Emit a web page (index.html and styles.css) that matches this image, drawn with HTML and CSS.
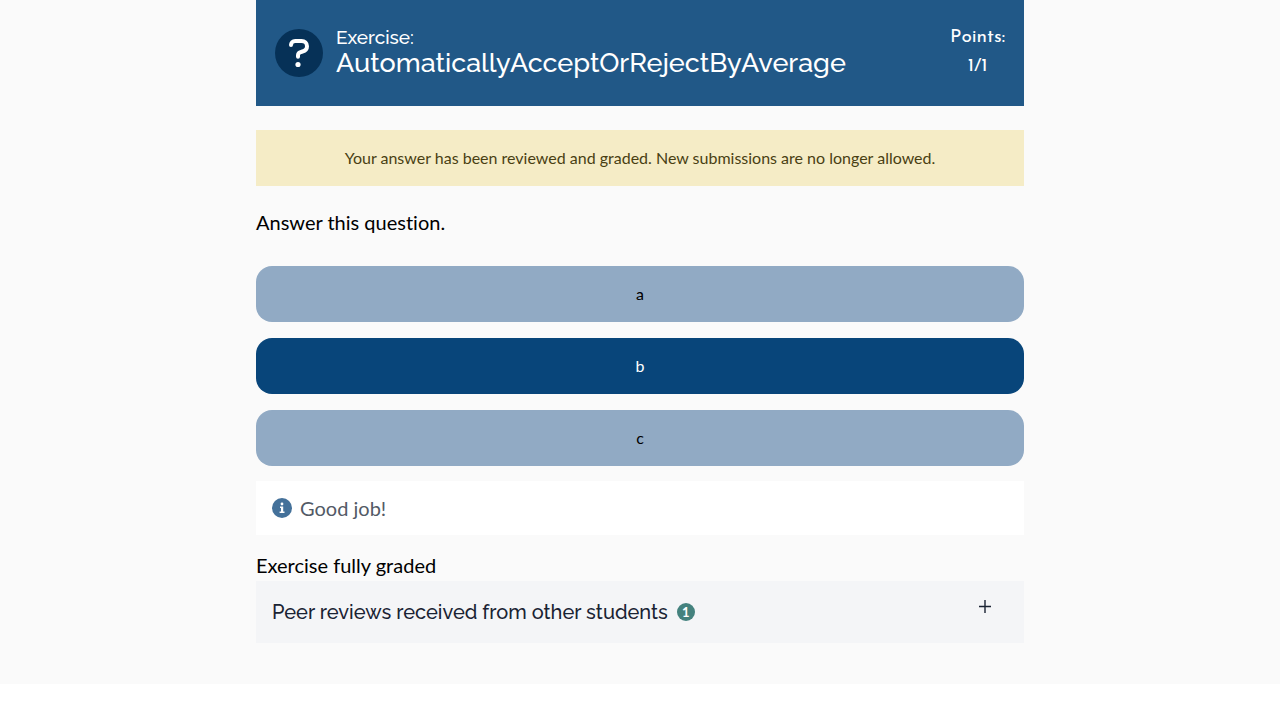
FILE: index.html
```html
<!DOCTYPE html>
<html lang="en">
<head>
<meta charset="utf-8">
<meta name="viewport" content="width=device-width, initial-scale=1">
<title>Exercise</title>
<link rel="stylesheet" href="styles.css">
</head>
<body>
<div class="page">
  <main class="exercise">
    <header class="exercise-header">
      <svg class="header-icon" viewBox="0 0 48 48" aria-hidden="true">
        <circle cx="24" cy="24" r="24" fill="#063157"/>
        <path d="M16 16.1C16 13.6 17.7 12 20.2 12h6.3c3.3 0 5.5 2.2 5.5 5.2 0 3-1.5 4.5-4.5 5.3L25 23.4c-1.4.6-2 1.5-2 3v1.4" fill="none" stroke="#fff" stroke-width="4" stroke-linecap="round" stroke-linejoin="round"/>
        <circle cx="23" cy="35.5" r="2.6" fill="#fff"/>
      </svg>
      <h1 class="title"><span class="title-label">Exercise:</span>AutomaticallyAcceptOrRejectByAverage</h1>
      <div class="points"><span>Points:</span><span>1/1</span></div>
    </header>
    <p class="notice">Your answer has been reviewed and graded. New submissions are no longer allowed.</p>
    <p class="question">Answer this question.</p>
    <div class="options">
      <button class="option" type="button">a</button>
      <button class="option option-selected" type="button" aria-pressed="true">b</button>
      <button class="option" type="button">c</button>
    </div>
    <div class="feedback">
      <svg class="info-icon" viewBox="0 0 20 20" aria-hidden="true">
        <circle cx="10" cy="10" r="10" fill="#44719a"/>
        <circle cx="10" cy="6" r="1.4" fill="#fff"/>
        <path d="M8 8.6h3.2v5h1.3V15H7.6v-1.4H9V10H8z" fill="#fff"/>
      </svg>
      <span>Good job!</span>
    </div>
    <p class="status">Exercise fully graded</p>
    <button class="reviews" type="button" aria-expanded="false">
      <span>Peer reviews received from other students</span>
      <span class="count">1</span>
      <svg class="plus" viewBox="0 0 12 13" aria-hidden="true"><path d="M0 6.5h12M6 0v13" stroke="#1a2333" stroke-width="1.4"/></svg>
    </button>
  </main>
</div>
</body>
</html>
```
FILE: styles.css
```css
* {
  box-sizing: border-box;
}

body {
  margin: 0;
  background: #fff;
  color: #000;
  font-family: Lato, sans-serif;
  font-size: 20px;
  font-variant-ligatures: none;
}

p,
h1 {
  margin: 0;
}

.page {
  padding-bottom: 41px;
  background: #fafafa;
}

.exercise {
  width: 60%;
  margin: 0 auto;
}

.exercise-header {
  display: flex;
  align-items: center;
  gap: 13px;
  padding: 23px 19px;
  background: #215887;
  color: #fff;
}

.header-icon {
  flex: none;
  width: 48px;
  height: 48px;
}

.title {
  flex: 1;
  padding-bottom: 4px;
  font-family: Raleway, Lato, sans-serif;
  font-size: 27px;
  font-weight: 500;
  line-height: 28px;
}

.title-label {
  display: block;
  font-size: 19px;
  line-height: 24px;
}

.points {
  display: flex;
  flex-direction: column;
  padding-bottom: 2px;
  font-family: "Josefin Sans", Lato, sans-serif;
  font-size: 19px;
  line-height: 29px;
  text-align: center;
}

.notice {
  margin-top: 24px;
  padding: 16px;
  background: #f5ecc6;
  color: #493f13;
  font-size: 16px;
  line-height: 24px;
  text-align: center;
}

.question {
  margin: 19px 0 27px;
  line-height: 34px;
}

.options {
  display: grid;
  gap: 16px;
}

.option {
  padding: 16px;
  border: 0;
  border-radius: 16px;
  background: #91aac4;
  color: #000;
  font-family: inherit;
  font-size: 16px;
  line-height: 24px;
}

.option-selected {
  background: #08457a;
  color: #fff;
}

.feedback {
  display: flex;
  align-items: center;
  gap: 8px;
  margin: 15px 0;
  padding: 10px 16px;
  background: #fff;
  color: #535a66;
  line-height: 34px;
}

.info-icon {
  width: 20px;
  height: 20px;
}

.status {
  line-height: 31px;
}

.reviews {
  display: flex;
  align-items: center;
  gap: 9px;
  width: 100%;
  padding: 16px 33px 16px 16px;
  border: 0;
  background: #f4f5f7;
  color: #1a2333;
  font-family: Raleway, Lato, sans-serif;
  font-size: 20px;
  font-weight: 500;
  line-height: 30px;
  text-align: left;
}

.count {
  width: 18px;
  height: 18px;
  border-radius: 50%;
  background: #44827e;
  color: #fff;
  font-family: Lato, sans-serif;
  font-size: 13px;
  font-weight: 700;
  line-height: 18px;
  text-align: center;
}

.plus {
  align-self: flex-start;
  width: 12px;
  height: 13px;
  margin: 3px 0 0 auto;
}
```
